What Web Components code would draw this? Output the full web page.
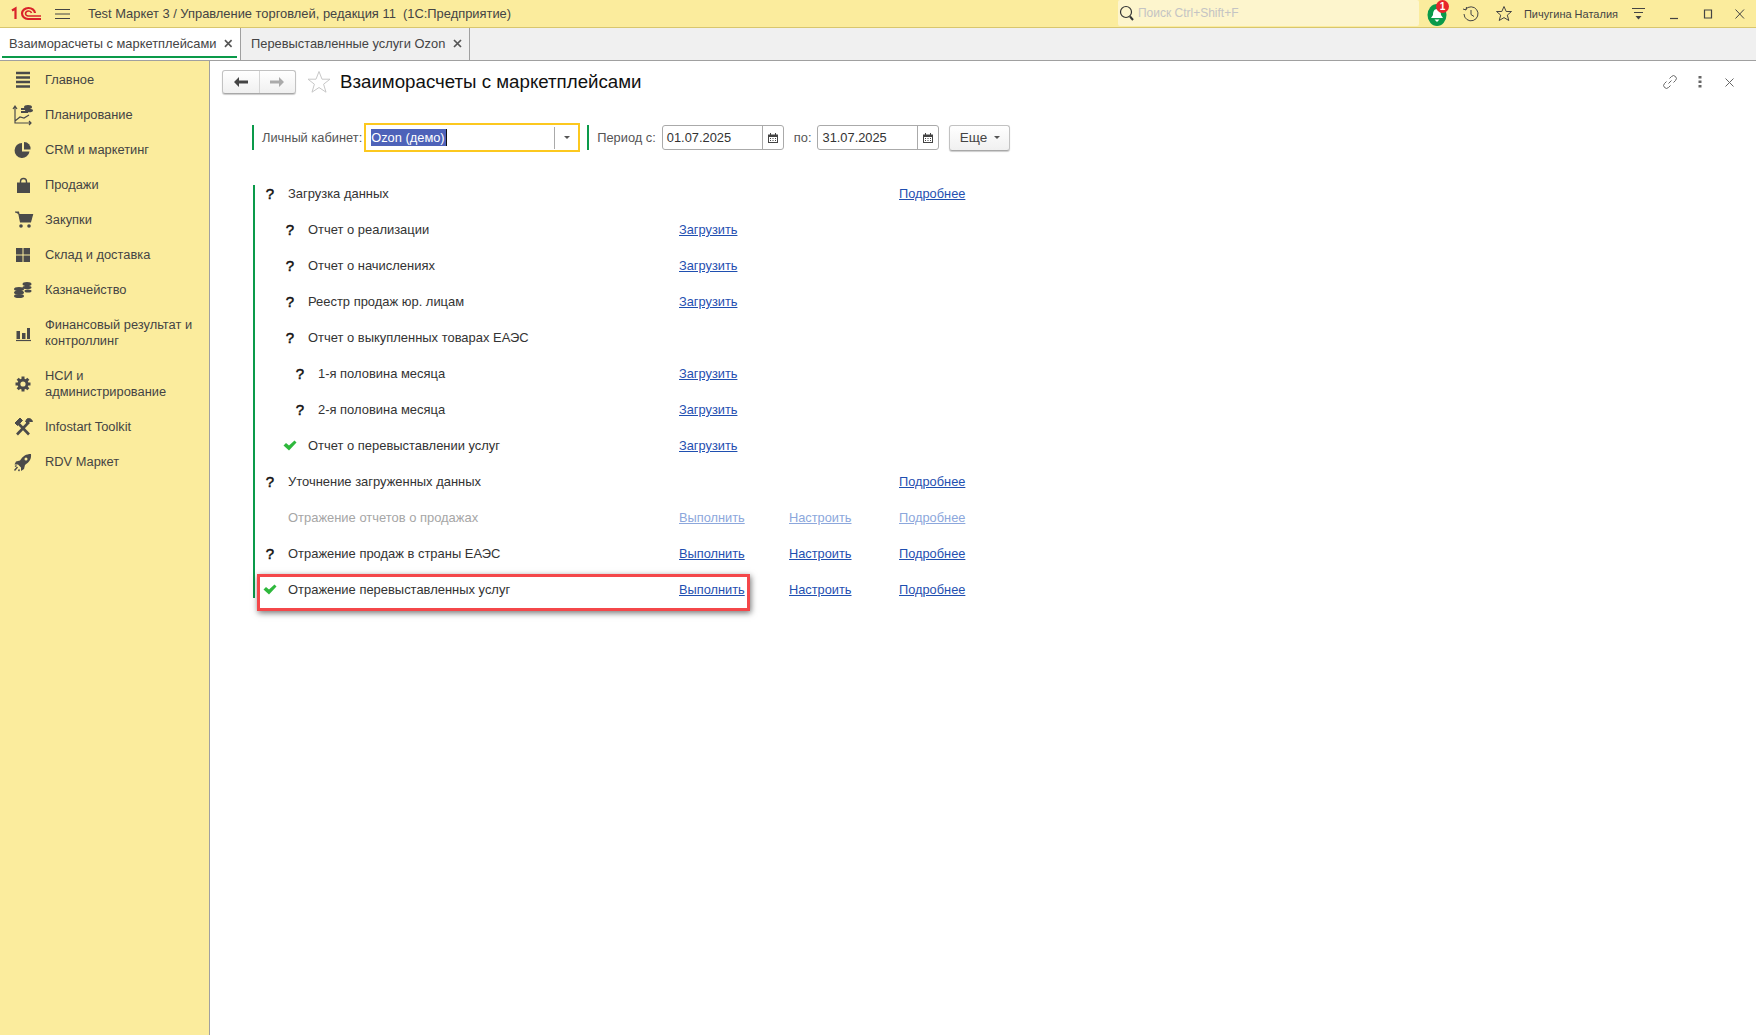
<!DOCTYPE html>
<html lang="ru">
<head>
<meta charset="utf-8">
<title>Взаиморасчеты с маркетплейсами</title>
<style>
    html, body { margin: 0; height: 100%; background: #fff; font: 12.85px "Liberation Sans", Arial, sans-serif; color: #333; }
    app-shell { height: 100vh; }
</style>
</head>
<body>
<app-shell>
    <title-bar slot="top"></title-bar>
    <tab-strip slot="top">
        <tab-item active>Взаиморасчеты с маркетплейсами</tab-item>
        <tab-item>Перевыставленные услуги Ozon</tab-item>
    </tab-strip>
    <side-nav slot="side"></side-nav>
    <market-form></market-form>
</app-shell>

<script>
const GEAR_TEETH = [0, 45, 90, 135].map(a => `<path d="M14 4.500v15" stroke="#4a4a4a" stroke-width="3" transform="rotate(${a} 14 12)"/>`).join('');

const ICONS = {
    main: '<path d="M7 5h14M7 9.500h14M7 14h14M7 18.500h14" stroke="#4a4a4a" stroke-width="2.400" fill="none"/>',
    plan: '<g stroke="#4a4a4a" fill="none" stroke-width="1.200"><path d="M6 3v17h16M4 6l2-3 2 3M20 18l2 2-2 2M6 18l5-4 4 1 5-3"/></g><g fill="#4a4a4a"><rect x="12" y="8" width="7" height="2"/><rect x="12" y="5" width="7" height="2"/><ellipse cx="19" cy="4" rx="4" ry="2"/><ellipse cx="20" cy="7.500" rx="4" ry="1.800"/></g>',
    crm: '<path d="M13 5a7.500 7.500 0 1 0 7.500 8.500H13z" fill="#4a4a4a"/><path d="M15 4a6.500 6.500 0 0 1 6.500 7.500H15z" fill="#4a4a4a"/>',
    sales: '<path d="M8 9.500h13V20H8z" fill="#4a4a4a"/><path d="M11.500 12V8.500a3 3 0 0 1 6 0V12" fill="none" stroke="#4a4a4a" stroke-width="1.400"/>',
    buy: '<path d="M6 4h3.500l2 10h10l2-7.500H10" fill="#4a4a4a" stroke="#4a4a4a" stroke-width="1.200"/><circle cx="12" cy="18" r="1.800" fill="#4a4a4a"/><circle cx="20" cy="18" r="1.800" fill="#4a4a4a"/>',
    store: '<path d="M7 5h6.500v6.500H7zM14.500 5H21v6.500h-6.500zM7 12.500h6.500V19H7zM14.500 12.500H21V19h-6.500z" fill="#4a4a4a"/>',
    cash: '<g fill="#4a4a4a"><ellipse cx="10" cy="11" rx="5" ry="2"/><ellipse cx="10" cy="14.500" rx="5" ry="2"/><ellipse cx="10" cy="18" rx="5" ry="2"/><ellipse cx="18" cy="6" rx="4.500" ry="2"/><ellipse cx="18" cy="9.500" rx="4.500" ry="1.700"/><ellipse cx="19" cy="13" rx="3.500" ry="1.500"/></g>',
    fin: '<path d="M7.500 10h3.500v8H7.500zM13 12h3.500v6H13zM18 7h3v11h-3z" fill="#4a4a4a"/><path d="M7 19.500h15" stroke="#4a4a4a" stroke-width="1.200"/>',
    gear: `${GEAR_TEETH}<circle cx="14" cy="12" r="5.500" fill="#4a4a4a"/><circle cx="14" cy="12" r="2.600" fill="#fbec9d"/>`,
    tools: '<g stroke="#4a4a4a" fill="none"><path d="M8 19.500L20 7" stroke-width="2.600"/><path d="M8 7l12 12.500" stroke-width="2.600"/><path d="M6 8l5-5 2.500 2.500-5 5zM18 4c2-1 4.500-.5 5.500 2.500l-3 0-2 2-2-2z" fill="#4a4a4a" stroke-width="1"/></g>',
    rocket: '<path d="M22 4c-5 0-8 2-11 6.500l-4 1-1.500 3 3.500 0 3 3 0 3.500 3-2 1-4c4.500-3 6.500-6 6-11z" fill="#4a4a4a"/><path d="M8.500 17l-3 3.500M7.500 15.500l-1.500 1M10.500 19.500l-1 1.500" stroke="#4a4a4a" stroke-width="1.400"/><circle cx="17" cy="9" r="1.500" fill="#fbec9d"/>'
};

class AppShell extends HTMLElement {
    constructor() {
        super();
        this.attachShadow({ mode: 'open' });
        this.shadowRoot.innerHTML = `
        <style>
            :host { display: flex; flex-direction: column; }
            .body { flex: 1; display: flex; min-height: 0; }
            main { flex: 1; min-width: 0; }
        </style>
        <slot name="top"></slot>
        <div class="body">
            <slot name="side"></slot>
            <main><slot></slot></main>
        </div>`;
    }
}

class TitleBar extends HTMLElement {
    constructor() {
        super();
        this.attachShadow({ mode: 'open' });
        this.shadowRoot.innerHTML = `
        <style>
            :host { display: flex; align-items: center; height: 28px; box-sizing: border-box; background: #fbec9d; border-bottom: 1px solid #d8c66e; color: #444; font-size: 12.9px; }
            svg { display: block; flex: none; }
            .logo { margin-left: 11px; }
            .menu { margin-left: 14px; }
            .caption { margin-left: 18px; white-space: pre; flex: 1; }
            .search { width: 301px; height: 26px; margin-bottom: 1px; box-sizing: border-box; display: flex; align-items: center; gap: 4px; padding-left: 1px; background: #fdf5cd; border-radius: 2px; color: #c4c4c4; font-size: 12px; }
            .bell { position: relative; margin-left: 8px; width: 20px; height: 24px; }
            .badge { position: absolute; left: 9px; top: -2px; width: 13px; height: 13px; border-radius: 50%; background: #e8262c; color: #fff; font: bold 10px/13px "Liberation Sans", sans-serif; text-align: center; }
            .user { font-size: 11px; margin-left: 11px; }
        </style>
        <svg class="logo" width="30" height="16" viewBox="0 0 30 16" fill="none" stroke="#d9232a" stroke-width="2.200">
            <path d="M1 4.500L4.500 2.500V13"/>
            <path d="M24 7A6.500 5.500 0 1 0 17 13H30"/>
            <path d="M20.500 7A3 2.500 0 1 0 17 10H30" stroke-width="1.600"/>
        </svg>
        <svg class="menu" width="15" height="12" viewBox="0 0 15 12" stroke="#444" stroke-width="1"><path d="M0 1.500h15M0 6h15M0 10.500h15"/></svg>
        <span class="caption">Test Маркет 3 / Управление торговлей, редакция 11  (1С:Предприятие)</span>
        <div class="search">
            <svg width="15" height="18" viewBox="0 0 15 18" fill="none" stroke="#333"><circle cx="7" cy="8" r="5.500" stroke-width="1.200"/><path d="M11 12.500l3 3.500" stroke-width="2"/></svg>
            <span>Поиск Ctrl+Shift+F</span>
        </div>
        <div class="bell">
            <svg width="20" height="24" viewBox="0 0 20 24"><ellipse cx="10" cy="13" rx="9.500" ry="11" fill="#0a9a4a"/><path d="M10 7c-3 0-4 3-4 6l-2 3h12l-2-3c0-3-1-6-4-6z" fill="#fff"/><path d="M7.500 17.500h5L10 20z" fill="#fff"/></svg>
            <span class="badge">1</span>
        </div>
        <svg style="margin-left:15px" width="18" height="18" viewBox="0 0 18 18" fill="none" stroke="#444"><path d="M3.500 4.500A7 7 0 1 1 2 9"/><path d="M1 4l3 1 .5-3" /><path d="M9 5v4.500l3 2"/></svg>
        <svg style="margin-left:15px" width="18" height="18" viewBox="0 0 18 18" fill="none" stroke="#444"><path d="M9 1.500l2.200 5h5.300l-4.200 3.600 1.500 5.400L9 12.600l-4.800 2.900 1.500-5.400L1.500 6.500h5.300z"/></svg>
        <span class="user">Пичугина Наталия</span>
        <svg style="margin-left:14px" width="13" height="13" viewBox="0 0 13 13" stroke="#444"><path d="M0 1.500h13M2 5.500h9"/><path d="M3.500 9h6L6.500 12.500z" fill="#444" stroke="none"/></svg>
        <svg style="margin-left:24px" width="10" height="12" viewBox="0 0 10 12" stroke="#444" stroke-width="1.200"><path d="M1 10.500h8"/></svg>
        <svg style="margin-left:24px" width="10" height="12" viewBox="0 0 10 12" fill="none" stroke="#444" stroke-width="1.200"><path d="M1.500 2h7v8h-7z"/></svg>
        <svg style="margin-left:22px;margin-right:11px" width="10" height="12" viewBox="0 0 10 12" stroke="#444"><path d="M.5 1.500l8.500 9M9 1.500l-8.500 9"/></svg>`;
    }
}

class TabStrip extends HTMLElement {
    constructor() {
        super();
        this.attachShadow({ mode: 'open' });
        this.shadowRoot.innerHTML = `
        <style>
            :host { display: flex; height: 33px; box-sizing: border-box; background: #f0f0f0; border-bottom: 1px solid #a0a0a0; }
        </style>
        <slot></slot>`;
    }
}

class TabItem extends HTMLElement {
    constructor() {
        super();
        this.attachShadow({ mode: 'open' });
        this.shadowRoot.innerHTML = `
        <style>
            :host { display: flex; align-items: center; box-sizing: border-box; height: 32px; padding: 0 7px 2px 10px; border-right: 1px solid #a0a0a0; color: #444; font-size: 12.87px; white-space: nowrap; position: relative; }
            :host([active]) { background: #fff; padding-left: 9px; width: 241px; }
            :host([active])::after { content: ""; position: absolute; left: 2px; right: 3px; bottom: 2px; height: 2px; background: #0a9a4a; }
            svg { margin-left: 8px; }
        </style>
        <slot></slot>
        <svg width="9" height="9" viewBox="0 0 9 9" stroke="#555" stroke-width="1.700"><path d="M1 1l7 7M8 1l-7 7"/></svg>`;
    }
}

class SideNav extends HTMLElement {
    constructor() {
        super();
        this.attachShadow({ mode: 'open' });
        const items = [
            ['main', 'Главное'], ['plan', 'Планирование'], ['crm', 'CRM и маркетинг'],
            ['sales', 'Продажи'], ['buy', 'Закупки'], ['store', 'Склад и доставка'],
            ['cash', 'Казначейство'], ['fin', 'Финансовый результат и контроллинг'],
            ['gear', 'НСИ и<br>администрирование'], ['tools', 'Infostart Toolkit'], ['rocket', 'RDV Маркет']
        ];
        this.shadowRoot.innerHTML = `
        <style>
            :host { display: block; width: 210px; box-sizing: border-box; flex: none; background: #fbec9d; border-right: 1px solid #a0a0a0; padding-top: 1px; color: #444; }
            .item { display: flex; align-items: center; min-height: 35px; padding: 0 12px 0 9px; box-sizing: border-box; }
            .item.two { min-height: 51px; }
            svg { flex: none; width: 26px; height: 24px; margin-right: 10px; }
            span { line-height: 16px; font-size: 12.85px; }
        </style>
        ${items.map(([icon, text]) => `
            <div class="item ${text.length > 20 ? 'two' : ''}">
                <svg viewBox="0 0 26 24">${ICONS[icon]}</svg>
                <span>${text}</span>
            </div>
        `).join('')}`;
    }
}

class CalendarField extends HTMLElement {
    constructor() {
        super();
        this.attachShadow({ mode: 'open' });
        this.shadowRoot.innerHTML = `
        <style>
            :host { display: flex; width: 122px; height: 25px; box-sizing: border-box; border: 1px solid #aaa; border-radius: 3px; color: #333; }
            .val { flex: 1; padding-left: 4px; line-height: 23px; }
            .btn { width: 20px; border-left: 1px solid #aaa; display: flex; align-items: center; justify-content: center; }
        </style>
        <div class="val"><slot></slot></div>
        <div class="btn">
            <svg width="10" height="10" viewBox="0 0 10 10"><path d="M0 1.500h10V10H0z" fill="#444"/><path d="M1 4h8v5H1z" fill="#fff"/><path d="M2 5h1v1H2zM4.500 5h1v1h-1zM7 5h1v1H7zM2 7h1v1H2zM4.500 7h1v1h-1zM7 7h1v1H7z" fill="#444"/><path d="M2.500 0v2M7.500 0v2" stroke="#444"/></svg>
        </div>`;
    }
}

class TaskRow extends HTMLElement {
    constructor() {
        super();
        this.attachShadow({ mode: 'open' });
    }

    connectedCallback() {
        const level = Number(this.getAttribute('level') || 0);
        const status = this.getAttribute('status');
        const links = (this.getAttribute('links') || '||').split('|');
        const mark = status === 'ok'
            ? '<svg width="14" height="11" viewBox="0 0 14 11"><path d="M.5 5.500L3 3l3 2.500 5.500-5 2 2L6 10.500z" fill="#2eb83c"/></svg>'
            : status === 'q' ? '<span class="q">?</span>' : '';
        this.shadowRoot.innerHTML = `
        <style>
            :host { display: grid; grid-template-columns: 424px 110px 110px auto; height: 17px; align-items: center; position: relative; color: #333; }
            :host([off]) { color: #a6a6a6; }
            .name { display: flex; align-items: center; padding-left: ${5 + [0, 20, 30][level]}px; white-space: nowrap; font-size: 12.95px; }
            .mark { width: 20px; margin-right: 8px; display: flex; justify-content: center; }
            .q { color: #111; font-size: 15px; line-height: 17px; -webkit-text-stroke: .5px #111; }
            a { color: #1f4fb0; text-decoration: underline; justify-self: start; white-space: nowrap; font-size: 12.8px; }
            :host([off]) a { color: #8ca7dc; }
            .hl { position: absolute; left: 2px; top: -7px; width: 493px; height: 37px; box-sizing: border-box; border: 3px solid #f4474a; box-shadow: 1px 2px 6px rgba(0,0,0,.55); pointer-events: none; }
        </style>
        <div class="name"><span class="mark">${mark}</span><span>${this.getAttribute('label')}</span></div>
        ${links.map(t => t ? `<a href="#">${t}</a>` : '<span></span>').join('')}
        ${this.hasAttribute('highlight') ? '<div class="hl"></div>' : ''}`;
    }
}

class MarketForm extends HTMLElement {
    constructor() {
        super();
        this.attachShadow({ mode: 'open' });
        this.shadowRoot.innerHTML = `
        <style>
            :host { display: block; position: relative; padding: 9px 0 0 12px; color: #333; }
            .head { display: flex; align-items: center; height: 24px; }
            .nav { display: flex; width: 74px; height: 24px; box-sizing: border-box; border: 1px solid #c2c2c2; border-bottom-color: #a8a8a8; border-radius: 3px; background: linear-gradient(#fff, #f0f0f0); box-shadow: 0 1px 1px rgba(0,0,0,.2); }
            .nav div { flex: 1; display: flex; align-items: center; justify-content: center; }
            .nav div + div { border-left: 1px solid #d5d5d5; }
            h1 { margin: 0 0 0 9px; font-size: 18.7px; font-weight: normal; color: #111; flex: 1; white-space: nowrap; }
            .star { margin-left: 11px; }
            .tools { display: flex; align-items: center; gap: 19px; margin-right: 22px; }
            .filters { display: flex; align-items: center; height: 29px; margin: 29px 0 0 30px; }
            .bar { width: 2px; height: 25px; background: #0a9a4a; flex: none; }
            .lbl { color: #555; white-space: nowrap; }
            .combo { display: flex; align-items: center; width: 216px; height: 29px; box-sizing: border-box; border: 2px solid #fcc81f; margin-left: 2px; padding-left: 5px; }
            .sel { background: #4d62b9; color: #fff; padding: 0 1px 0 0; line-height: 17px; }
            .caret { width: 1px; height: 17px; background: #111; }
            .drop { margin-left: auto; width: 23px; height: 22px; border-left: 1px solid #aaa; display: flex; align-items: center; justify-content: center; }
            .tri { width: 0; height: 0; border: 3px solid transparent; border-top: 3px solid #555; border-bottom: 0; }
            .more { display: flex; align-items: center; justify-content: center; gap: 7px; width: 61px; height: 26px; box-sizing: border-box; border: 1px solid #c2c2c2; border-bottom-color: #a8a8a8; border-radius: 3px; background: linear-gradient(#fff, #f0f0f0); box-shadow: 0 1px 1px rgba(0,0,0,.2); margin-left: 10px; font-size: 13.5px; color: #444; }
            .tasks { display: grid; row-gap: 19px; width: 700px; margin: 33px 0 0 31px; border-left: 2px solid #0a9a4a; }
        </style>
        <div class="head">
            <div class="nav">
                <div><svg width="14" height="10" viewBox="0 0 14 10" fill="#444"><path d="M0 5l5-5v3.500h9v3H5V10z"/></svg></div>
                <div><svg width="14" height="10" viewBox="0 0 14 10" fill="#aaa"><path d="M14 5L9 0v3.500H0v3h9V10z"/></svg></div>
            </div>
            <svg class="star" width="24" height="24" viewBox="0 0 24 24" fill="#fff" stroke="#c8c8c8"><path d="M12 1.500l3 7.700h8l-6.400 5 2.400 8-7-4.700-7 4.700 2.400-8L1 9.200h8z"/></svg>
            <h1>Взаиморасчеты с маркетплейсами</h1>
            <div class="tools">
                <svg style="margin-right:1px" width="16" height="16" viewBox="0 0 16 16" fill="none" stroke="#666"><path d="M6.500 9.500l3-3M7.500 4.500l2-2a2.800 2.800 0 0 1 4 4l-2 2M8.500 11.500l-2 2a2.800 2.800 0 0 1-4-4l2-2"/></svg>
                <svg width="4" height="12" viewBox="0 0 4 12" fill="#666"><path d="M.5 0h3v2.500h-3zM.5 4.500h3V7h-3zM.5 9h3v2.500h-3z"/></svg>
                <svg style="margin-left:4px" width="9" height="9" viewBox="0 0 9 9" stroke="#666"><path d="M.5.500l8 8M8.500.500l-8 8"/></svg>
            </div>
        </div>
        <div class="filters">
            <div class="bar"></div>
            <span class="lbl" style="margin-left:8px">Личный кабинет:</span>
            <div class="combo"><span class="sel">Ozon (демо)</span><span class="caret"></span><div class="drop"><span class="tri"></span></div></div>
            <div class="bar" style="margin-left:7px"></div>
            <span class="lbl" style="margin-left:8px">Период с:</span>
            <calendar-field style="margin-left:6px">01.07.2025</calendar-field>
            <span class="lbl" style="margin:0 6px 0 10px">по:</span>
            <calendar-field>31.07.2025</calendar-field>
            <div class="more"><span>Еще</span><span class="tri"></span></div>
        </div>
        <div class="tasks">
            <task-row status="q" label="Загрузка данных" links="||Подробнее"></task-row>
            <task-row status="q" level="1" label="Отчет о реализации" links="Загрузить||"></task-row>
            <task-row status="q" level="1" label="Отчет о начислениях" links="Загрузить||"></task-row>
            <task-row status="q" level="1" label="Реестр продаж юр. лицам" links="Загрузить||"></task-row>
            <task-row status="q" level="1" label="Отчет о выкупленных товарах ЕАЭС" links="||"></task-row>
            <task-row status="q" level="2" label="1-я половина месяца" links="Загрузить||"></task-row>
            <task-row status="q" level="2" label="2-я половина месяца" links="Загрузить||"></task-row>
            <task-row status="ok" level="1" label="Отчет о перевыставлении услуг" links="Загрузить||"></task-row>
            <task-row status="q" label="Уточнение загруженных данных" links="||Подробнее"></task-row>
            <task-row off label="Отражение отчетов о продажах" links="Выполнить|Настроить|Подробнее"></task-row>
            <task-row status="q" label="Отражение продаж в страны ЕАЭС" links="Выполнить|Настроить|Подробнее"></task-row>
            <task-row status="ok" highlight label="Отражение перевыставленных услуг" links="Выполнить|Настроить|Подробнее"></task-row>
        </div>`;
    }
}

customElements.define('app-shell', AppShell);
customElements.define('title-bar', TitleBar);
customElements.define('tab-strip', TabStrip);
customElements.define('tab-item', TabItem);
customElements.define('side-nav', SideNav);
customElements.define('calendar-field', CalendarField);
customElements.define('task-row', TaskRow);
customElements.define('market-form', MarketForm);
</script>
</body>
</html>
